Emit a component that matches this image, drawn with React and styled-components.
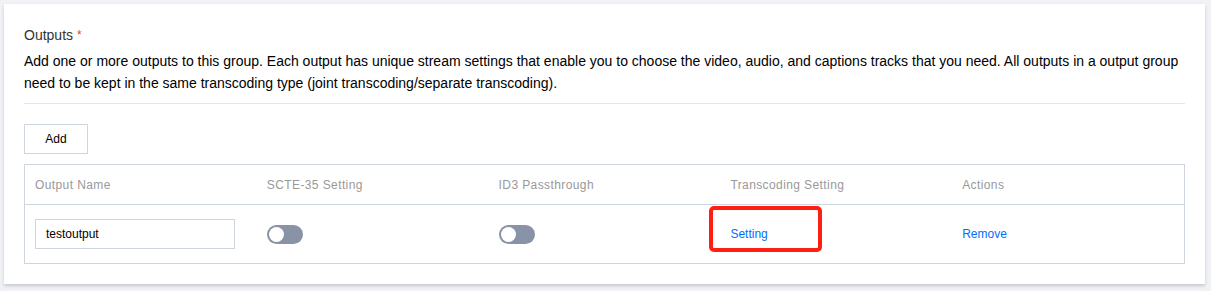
import React from "react";
import styled, { createGlobalStyle } from "styled-components";

const Global = createGlobalStyle`
  html, body { margin: 0; padding: 0; background: #f0f2f5; }
  body { font-family: "Liberation Sans", Arial, sans-serif; color: #333; }
  * { box-sizing: border-box; }
`;

const Page = styled.div`
  padding: 4px 6px 8px 4px;
`;

const Card = styled.section`
  background: #fff;
  box-shadow: 0 2px 3px rgba(54, 58, 80, 0.22);
  padding: 20px 20px 20px 20px;
`;

const Label = styled.div`
  font-size: 14px;
  line-height: 22px;
  color: #333;
`;

const Required = styled.span`
  color: #e54545;
  margin-left: 4px;
  font-size: 12px;
  vertical-align: top;
`;

const Desc = styled.p`
  margin: 4px 0 0;
  font-size: 14px;
  line-height: 22px;
  color: #000;
  padding-bottom: 9px;
  border-bottom: 1px solid #e5e5e5;
`;

const Toolbar = styled.div`
  margin-top: 20px;
  display: flex;
`;

const Button = styled.button`
  width: 64px;
  height: 30px;
  background: #fff;
  border: 1px solid #cfd5de;
  font-family: inherit;
  font-size: 12px;
  color: #000;
  padding: 0;
  cursor: pointer;
`;

const Table = styled.div`
  margin-top: 10px;
  border: 1px solid #cfd5de;
`;

const Row = styled.div`
  display: grid;
  grid-template-columns: repeat(5, 1fr);
  height: ${(p) => (p.$head ? "39px" : "59px")};
  align-items: center;
  border-top: ${(p) => (p.$head ? "none" : "1px solid #cfd5de")};
`;

const Cell = styled.div`
  position: relative;
  padding: 0 10px;
  font-size: 12px;
  letter-spacing: ${(p) => (p.$head ? "0.4px" : "0")};
  color: ${(p) => (p.$head ? "#999" : "#000")};
  display: flex;
  align-items: center;
`;

const Input = styled.input`
  width: 200px;
  height: 30px;
  border: 1px solid #cfd5de;
  padding: 0 10px;
  font-family: inherit;
  font-size: 12px;
  color: #000;
  outline: none;
`;

const Switch = styled.span`
  display: inline-block;
  position: relative;
  width: 36px;
  height: 19px;
  border-radius: 10px;
  background: #8893a8;
  margin-top: 1px;
  &::after {
    content: "";
    position: absolute;
    left: 2px;
    top: 2px;
    width: 15px;
    height: 15px;
    border-radius: 50%;
    background: #fff;
  }
`;

const Link = styled.a`
  color: #006eff;
  font-size: 12px;
  text-decoration: none;
  cursor: pointer;
`;

const Highlight = styled.span`
  position: absolute;
  left: -11px;
  top: -21px;
  width: 113px;
  height: 46px;
  border: 4px solid #ff1e12;
  border-radius: 5px;
  pointer-events: none;
`;

const heads = ["Output Name", "SCTE-35 Setting", "ID3 Passthrough", "Transcoding Setting", "Actions"];

export default function App() {
  return (
    <>
      <Global />
      <Page>
        <Card>
          <Label>
            Outputs<Required>*</Required>
          </Label>
          <Desc>
            Add one or more outputs to this group. Each output has unique stream settings that enable you to choose the
            video, audio, and captions tracks that you need. All outputs in a output group need to be kept in the same
            transcoding type (joint transcoding/separate transcoding).
          </Desc>
          <Toolbar>
            <Button>Add</Button>
          </Toolbar>
          <Table>
            <Row $head>
              {heads.map((h) => (
                <Cell key={h} $head>
                  {h}
                </Cell>
              ))}
            </Row>
            <Row>
              <Cell>
                <Input defaultValue="testoutput" />
              </Cell>
              <Cell>
                <Switch />
              </Cell>
              <Cell>
                <Switch />
              </Cell>
              <Cell>
                <Highlight />
                <Link>Setting</Link>
              </Cell>
              <Cell>
                <Link>Remove</Link>
              </Cell>
            </Row>
          </Table>
        </Card>
      </Page>
    </>
  );
}
